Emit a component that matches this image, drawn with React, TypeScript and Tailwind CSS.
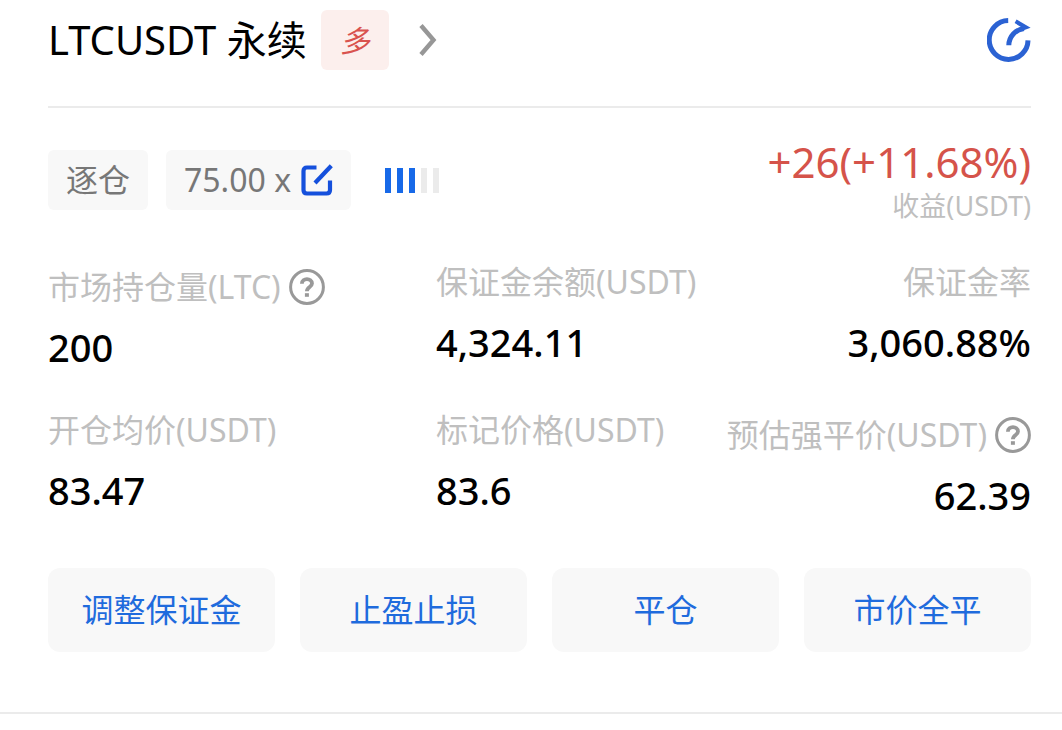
import React from "react";

type Metric = {
  label: string;
  value: string;
  help?: boolean;
  alignRight?: boolean;
};

const metrics: Metric[] = [
  { label: "市场持仓量(LTC)", value: "200", help: true },
  { label: "保证金余额(USDT)", value: "4,324.11" },
  { label: "保证金率", value: "3,060.88%", alignRight: true },
  { label: "开仓均价(USDT)", value: "83.47" },
  { label: "标记价格(USDT)", value: "83.6" },
  { label: "预估强平价(USDT)", value: "62.39", help: true, alignRight: true },
];

const actions = ["调整保证金", "止盈止损", "平仓", "市价全平"];

const signal = [true, true, true, false, false];

function ChevronIcon() {
  return (
    <svg width="18" height="32" viewBox="0 0 18 32" fill="none" stroke="#979797" strokeWidth="4.4" aria-hidden="true">
      <path d="M2 1.5 L14.5 16 L2 30.5" />
    </svg>
  );
}

function ShareIcon() {
  return (
    <svg width="44" height="44" viewBox="0 0 44 44" fill="none" stroke="#2b62d3" strokeWidth="5" aria-hidden="true">
      <path d="M21.2 2.6 A19.4 19.4 0 1 0 41 22.4" />
      <path d="M21.8 27.3 C22 18.5 28.5 11.6 37 10.6" />
      <path d="M29.6 1.4 L43.6 9.8 L36 12.6 L34 9 L27.6 5 Z" fill="#2b62d3" stroke="none" />
    </svg>
  );
}

function EditIcon() {
  return (
    <svg width="32" height="32" viewBox="0 0 32 32" fill="none" stroke="#1550dc" strokeWidth="4.2" aria-hidden="true">
      <path d="M15.5 3.5 H6 Q2.5 3.5 2.5 7 V26 Q2.5 29.5 6 29.5 H25.5 Q29 29.5 29 26 V16.5" />
      <path d="M14 19 L30.3 1.7" />
    </svg>
  );
}

function HelpIcon() {
  return (
    <svg width="36" height="36" viewBox="0 0 36 36" fill="none" stroke="#999999" aria-hidden="true">
      <circle cx="18" cy="18" r="16.4" strokeWidth="3" />
      <path d="M12.9 14.8 C12.9 8.6 23 8.8 23 14.6 C23 18 17.9 18 17.9 22.2" strokeWidth="3.8" />
      <path d="M17.9 24.2 V27.8" strokeWidth="4" />
    </svg>
  );
}

function MetricCell({ label, value, help, alignRight }: Metric) {
  return (
    <div className={`flex flex-col gap-5 ${alignRight ? "items-end" : "items-start"} ${help ? "pt-[5px]" : ""}`}>
      <dt className="flex h-10 items-center gap-2 text-[32px] leading-10 whitespace-nowrap text-[#bfbfbf]">
        {label}
        {help && (
          <button type="button" aria-label={`${label}说明`}>
            <HelpIcon />
          </button>
        )}
      </dt>
      <dd className="text-[38px] leading-10 font-medium text-black">{value}</dd>
    </div>
  );
}

export default function App() {
  return (
    <main className="bg-white font-['Noto_Sans','Noto_Sans_CJK_SC',sans-serif]">
      <article className="border-b-2 border-[#ebebeb] pr-[31px] pb-[60px] pl-12">
        <header className="flex items-center justify-between border-b-2 border-[#ebebeb] pt-[10px] pb-9">
          <div className="flex items-center">
            <h1 className="text-[40px] leading-[60px] whitespace-nowrap text-black">LTCUSDT 永续</h1>
            <span className="ml-[14px] flex h-[60px] w-[68px] items-center justify-center rounded-md bg-[#fcefed] text-[30px] text-[#d9534f] italic">
              多
            </span>
            <button type="button" aria-label="查看详情" className="ml-[30px]">
              <ChevronIcon />
            </button>
          </div>
          <button type="button" aria-label="分享">
            <ShareIcon />
          </button>
        </header>

        <section className="flex items-start justify-between pt-[34px]">
          <div className="flex h-[76px] items-center pt-2 pb-2">
            <span className="rounded-md bg-[#f8f8f8] px-[18px] text-[32px] leading-[60px] text-[#777777]">逐仓</span>
            <button
              type="button"
              aria-label="75.00 x 调整杠杆"
              className="ml-[18px] flex items-center gap-[10px] rounded-md bg-[#f8f8f8] px-[18px] text-[32px] leading-[60px] text-[#777777]"
            >
              75.00 x
              <EditIcon />
            </button>
            <div className="ml-[34px] flex gap-[6px]">
              {signal.map((on, i) => (
                <span key={i} className={`h-[25px] w-[6px] ${on ? "bg-[#1769e8]" : "bg-[#ebebeb]"}`} />
              ))}
            </div>
          </div>
          <div className="text-right">
            <p className="text-[42px] leading-10 text-[#d5534a]">+26(+11.68%)</p>
            <p className="pt-1 text-[27px] leading-10 text-[#bfbfbf]">收益(USDT)</p>
          </div>
        </section>

        <dl className="grid grid-cols-[388fr_288fr_307fr] gap-y-[43px] pt-9">
          {metrics.map((m) => (
            <MetricCell key={m.label} {...m} />
          ))}
        </dl>

        <div className="grid grid-cols-4 gap-[25px] pt-[53px]">
          {actions.map((a) => (
            <button
              key={a}
              type="button"
              className="rounded-xl bg-[#f8f8f8] text-[32px] leading-[84px] whitespace-nowrap text-[#1f6bdd]"
            >
              {a}
            </button>
          ))}
        </div>
      </article>
    </main>
  );
}
